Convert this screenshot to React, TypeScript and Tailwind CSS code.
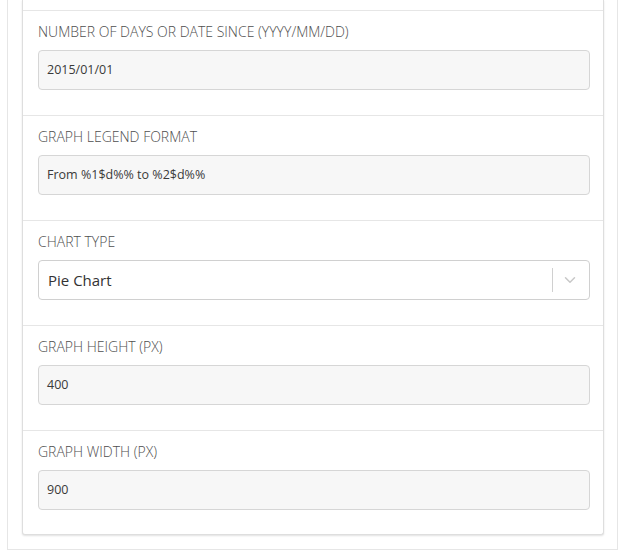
import { ChevronDown } from "lucide-react"

interface FieldProps {
    label: string
    value: string
    last?: boolean
}

const TextField: React.FC<FieldProps> = ({ label, value, last }) => {
    return (
        <div className={`border-t border-[#e6e6e6] pl-[15px] pr-[13px] pt-[11px] ${last ? 'pb-[24px]' : 'pb-[25px]'}`}>
            <div className="h-[20px] leading-[20px] text-[14px] font-light uppercase text-[#4e4e4e]">{label}</div>
            <div className="mt-[8px] h-[40px] flex items-center rounded-[4px] border border-[#d6d6d6] bg-[#f7f7f7] pl-[8px] text-[12.5px] text-[#3a3a3a]">
                {value}
            </div>
        </div>
    )
}

const SelectField: React.FC<FieldProps> = ({ label, value }) => {
    return (
        <div className="border-t border-[#e6e6e6] pl-[15px] pr-[13px] pt-[11px] pb-[25px]">
            <div className="h-[20px] leading-[20px] text-[14px] font-light uppercase text-[#4e4e4e]">{label}</div>
            <div className="mt-[8px] h-[40px] flex items-center rounded-[4px] border border-[#d0d0d0] bg-white text-[15px] text-[#333]">
                <div className="flex-1 pl-[9px]">{value}</div>
                <div className="w-px h-[24px] bg-[#d0d0d0]"></div>
                <div className="w-[36px] flex justify-center pr-[2px] text-[#c8c8c8]">
                    <ChevronDown size={18} strokeWidth={2} />
                </div>
            </div>
        </div>
    )
}

export default function App() {
    return (
        <div className="bg-white h-[559px] pl-[7px] pr-[6px]" style={{ fontFamily: '"Open Sans", "Liberation Sans", sans-serif' }}>
            <div className="border-x border-b border-[#e6e6e6] h-[550px] pl-[14px] pr-[13px]">
                <div className="border-x border-b border-[#dedede] rounded-b-[3px] bg-white shadow-[0_1px_2px_rgba(0,0,0,0.12)]">
                    <div className="h-[10px]"></div>
                    <TextField label="Number of days or date since (YYYY/MM/DD)" value="2015/01/01" />
                    <TextField label="Graph legend format" value="From %1$d%% to %2$d%%" />
                    <SelectField label="Chart type" value="Pie Chart" />
                    <TextField label="Graph height (px)" value="400" />
                    <TextField label="Graph width (px)" value="900" last />
                </div>
            </div>
        </div>
    )
}
